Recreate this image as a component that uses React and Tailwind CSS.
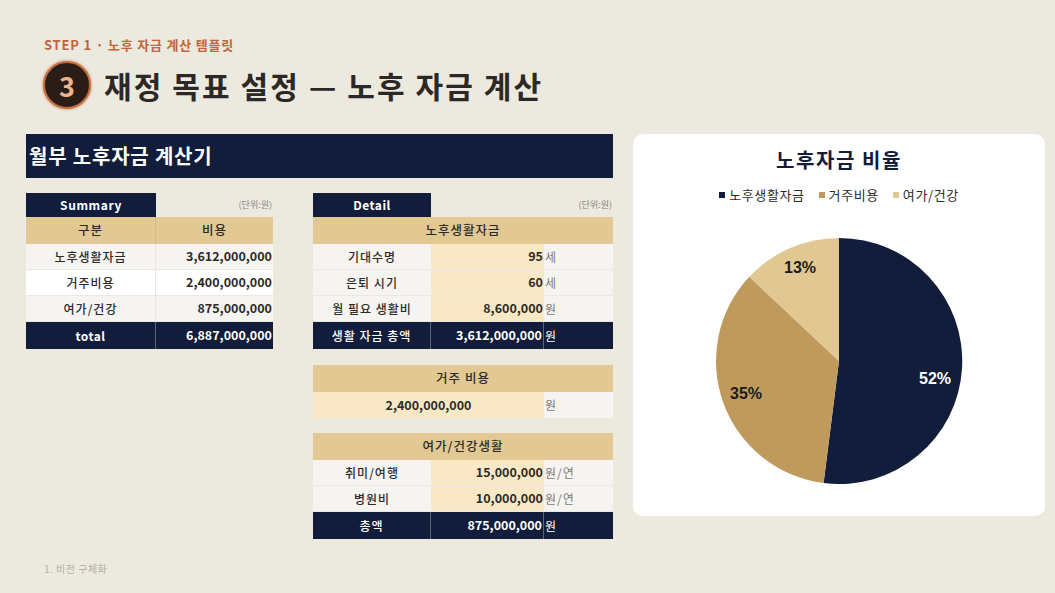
import React from "react";

function SummaryTable() {
  const rows = [
    { label: "노후생활자금", value: "3,612,000,000", bg: "bg-[#f5f4f1]" },
    { label: "거주비용", value: "2,400,000,000", bg: "bg-white" },
    { label: "여가/건강", value: "875,000,000", bg: "bg-[#f5f4f1]" },
  ];
  return (
    <div className="w-[247px]">
      <div className="flex h-[24px]">
        <div className="w-[130px] bg-[#111d3a] flex items-center justify-center text-white font-bold text-[12px] tracking-[0.6px]">
          Summary
        </div>
        <div className="flex-1 flex items-center justify-end text-[9px] text-[#8a857c] pr-[1px]">(단위:원)</div>
      </div>
      <div className="grid grid-cols-[130px_117px] h-[27px] bg-[#e2c892] text-[12.5px] font-medium text-[#2d2a26] tracking-[1px]">
        <div className="flex items-center justify-center border-r border-[#d6bb82]">구분</div>
        <div className="flex items-center justify-center">비용</div>
      </div>
      {rows.map((r) => (
        <div key={r.label} className={`grid grid-cols-[130px_117px] h-[26px] ${r.bg} border-b border-[#ebe8e2]`}>
          <div className="flex items-center justify-center text-[12px] font-medium text-[#2d2a26] border-r border-[#ebe8e2] tracking-[1px]">{r.label}</div>
          <div className="flex items-center justify-end text-[12.5px] font-bold text-[#2d2a26] pr-[1px]">{r.value}</div>
        </div>
      ))}
      <div className="grid grid-cols-[130px_117px] h-[27px] bg-[#111d3a] text-white">
        <div className="flex items-center justify-center text-[12px] font-bold border-r border-[#5b6478] tracking-[0.5px]">total</div>
        <div className="flex items-center justify-end text-[12.5px] font-bold pr-[1px]">6,887,000,000</div>
      </div>
    </div>
  );
}

function TanHeader({ children }) {
  return (
    <div className="h-[27px] bg-[#e2c892] flex items-center justify-center text-[12.5px] font-medium text-[#2d2a26] tracking-[1px]">
      {children}
    </div>
  );
}

function DetailRow({ label, value, unit }) {
  return (
    <div className="grid grid-cols-[118px_113px_69px] h-[26px] border-b border-[#ebe8e2]">
      <div className="bg-[#f5f4f1] flex items-center justify-center text-[12px] font-medium text-[#2d2a26] tracking-[1px]">{label}</div>
      <div className="bg-[#f8e8c6] flex items-center justify-end text-[12.5px] font-bold text-[#2d2a26] pr-[1px]">{value}</div>
      <div className="bg-[#f5f4f1] flex items-center pl-[1px] text-[12px] text-[#7d7a74] tracking-[1px]">{unit}</div>
    </div>
  );
}

function TotalRow({ label, value, unit }) {
  return (
    <div className="grid grid-cols-[118px_113px_69px] h-[27px] bg-[#111d3a] text-white">
      <div className="flex items-center justify-center text-[12px] font-medium border-r border-[#5b6478] tracking-[1px]">{label}</div>
      <div className="flex items-center justify-end text-[12.5px] font-bold pr-[1px] border-r border-[#5b6478]">{value}</div>
      <div className="flex items-center pl-[1px] text-[12px]">{unit}</div>
    </div>
  );
}

function DetailTable() {
  return (
    <div className="w-[300px] flex flex-col">
      <div className="flex h-[24px]">
        <div className="w-[118px] bg-[#111d3a] flex items-center justify-center text-white font-bold text-[12px] tracking-[0.5px]">Detail</div>
        <div className="flex-1 flex items-center justify-end text-[9px] text-[#8a857c] pr-[1px]">(단위:원)</div>
      </div>
      <TanHeader>노후생활자금</TanHeader>
      <DetailRow label="기대수명" value="95" unit="세" />
      <DetailRow label="은퇴 시기" value="60" unit="세" />
      <DetailRow label="월 필요 생활비" value="8,600,000" unit="원" />
      <TotalRow label="생활 자금 총액" value="3,612,000,000" unit="원" />

      <div className="mt-[16px]">
        <TanHeader>거주 비용</TanHeader>
        <div className="grid grid-cols-[231px_69px] h-[26px]">
          <div className="bg-[#f8e8c6] flex items-center justify-center text-[12.5px] font-bold text-[#2d2a26]">2,400,000,000</div>
          <div className="bg-[#f5f4f1] flex items-center pl-[1px] text-[12px] text-[#7d7a74]">원</div>
        </div>
      </div>

      <div className="mt-[15px]">
        <TanHeader>여가/건강생활</TanHeader>
        <DetailRow label="취미/여행" value="15,000,000" unit="원/연" />
        <DetailRow label="병원비" value="10,000,000" unit="원/연" />
        <TotalRow label="총액" value="875,000,000" unit="원" />
      </div>
    </div>
  );
}

function PieChart() {
  return (
    <svg width="250" height="250" viewBox="0 0 250 250">
      <path d="M125,125 L125,2 A123,123 0 1 1 109.6,247 Z" fill="#111d3a" />
      <path d="M125,125 L109.6,247 A123,123 0 0 1 35.3,40.8 Z" fill="#c09a5c" />
      <path d="M125,125 L35.3,40.8 A123,123 0 0 1 125,2 Z" fill="#e1c893" />
      <g fontFamily="'Liberation Sans', Arial, sans-serif" fontWeight="700" fontSize="16" textAnchor="middle" dominantBaseline="central">
        <text x="221" y="142" fill="#ffffff">52%</text>
        <text x="32" y="157" fill="#1a1a1a">35%</text>
        <text x="86" y="31" fill="#1a1a1a">13%</text>
      </g>
    </svg>
  );
}

function ChartCard() {
  return (
    <div className="w-[412px] h-[382px] bg-white rounded-[10px] flex flex-col items-center pt-[12px]">
      <div className="h-[28px] leading-[28px] text-[20px] font-bold text-[#111d3a] tracking-[1.6px]">노후자금 비율</div>
      <div className="mt-[12px] h-[18px] flex items-center gap-[14px] text-[13px] text-[#2d2a26] tracking-[0.6px]">
        <div className="flex items-center gap-[4px]">
          <span className="w-[6px] h-[6px] bg-[#111d3a]" />
          <span>노후생활자금</span>
        </div>
        <div className="flex items-center gap-[4px]">
          <span className="w-[6px] h-[6px] bg-[#c09a5c]" />
          <span>거주비용</span>
        </div>
        <div className="flex items-center gap-[4px]">
          <span className="w-[6px] h-[6px] bg-[#e1c893]" />
          <span>여가/건강</span>
        </div>
      </div>
      <div className="mt-[32px]">
        <PieChart />
      </div>
    </div>
  );
}

export default function App() {
  return (
    <div className="w-[1055px] h-[593px] bg-[#ece9df] overflow-hidden flex flex-col pl-[26px] font-['Noto_Sans_CJK_KR','Noto_Sans',sans-serif]">
      <div className="pl-[18px] pt-[36px]">
        <div className="h-[18px] leading-[18px] text-[13px] font-bold text-[#c2653b] tracking-[0.8px]">STEP 1 · 노후 자금 계산 템플릿</div>
        <div className="mt-[7px] h-[48px] flex items-center gap-[13px] -ml-[1px]">
          <div className="w-[48px] h-[48px] rounded-full bg-[#2a1c16] border-[2px] border-[#c46d3e] shadow-[0_0_3px_#c46d3e] flex items-center justify-center text-[27px] font-bold text-[#ebb48c] leading-none">
            3
          </div>
          <div className="text-[30px] font-bold text-[#2b2826] tracking-[2.1px] leading-none">재정 목표 설정 — 노후 자금 계산</div>
        </div>
      </div>

      <div className="mt-[25px] flex gap-[20px]">
        <div className="w-[587px] flex flex-col">
          <div className="h-[44px] bg-[#111d3a] flex items-center pl-[3px] text-white text-[20px] font-bold tracking-[0.8px]">월부 노후자금 계산기</div>
          <div className="mt-[15px] flex gap-[40px]">
            <SummaryTable />
            <DetailTable />
          </div>
        </div>
        <ChartCard />
      </div>

      <div className="mt-auto mb-[17px] pl-[18px] text-[10px] text-[#b3afa6] tracking-[0.5px]">1. 비전 구체화</div>
    </div>
  );
}
